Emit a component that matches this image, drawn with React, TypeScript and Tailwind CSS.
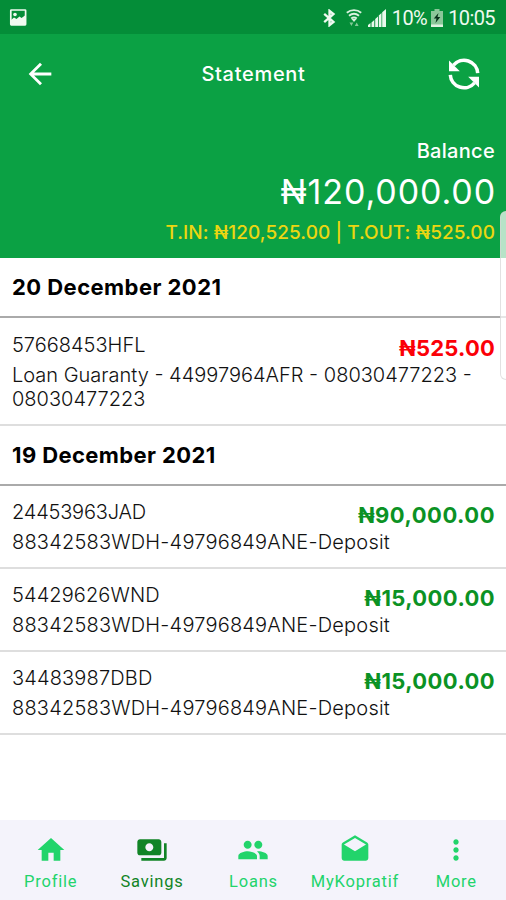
import { MdArrowBack, MdDrafts, MdHome, MdMoreVert, MdPayments, MdPeople } from "react-icons/md";

interface Transaction {
  id: string;
  idSpacing: string;
  details: string;
  detailsSpacing: string;
  amount: string;
  amountSpacing: string;
  debit?: boolean;
}

const groups: { date: string; dateSpacing: string; items: Transaction[] }[] = [
  {
    date: "20 December 2021",
    dateSpacing: "tracking-[0.45px]",
    items: [
      {
        id: "57668453HFL",
        idSpacing: "tracking-normal",
        details: "Loan Guaranty - 44997964AFR - 08030477223 - 08030477223",
        detailsSpacing: "tracking-normal",
        amount: "₦525.00",
        amountSpacing: "tracking-[0.2px]",
        debit: true,
      },
    ],
  },
  {
    date: "19 December 2021",
    dateSpacing: "tracking-[0.4px]",
    items: [
      {
        id: "24453963JAD",
        idSpacing: "tracking-[-0.2px]",
        details: "88342583WDH-49796849ANE-Deposit",
        detailsSpacing: "tracking-[0.2px]",
        amount: "₦90,000.00",
        amountSpacing: "tracking-[0.5px]",
      },
      {
        id: "54429626WND",
        idSpacing: "tracking-[0.1px]",
        details: "88342583WDH-49796849ANE-Deposit",
        detailsSpacing: "tracking-[0.2px]",
        amount: "₦15,000.00",
        amountSpacing: "tracking-[0.4px]",
      },
      {
        id: "34483987DBD",
        idSpacing: "tracking-[0.15px]",
        details: "88342583WDH-49796849ANE-Deposit",
        detailsSpacing: "tracking-[0.2px]",
        amount: "₦15,000.00",
        amountSpacing: "tracking-[0.4px]",
      },
    ],
  },
];

const tabs = [
  { label: "Profile", icon: MdHome, active: false },
  { label: "Savings", icon: MdPayments, active: true },
  { label: "Loans", icon: MdPeople, active: false },
  { label: "MyKopratif", icon: MdDrafts, active: false },
  { label: "More", icon: MdMoreVert, active: false },
];

function PictureIcon() {
  return (
    <svg width="18" height="17" viewBox="0 0 18 17" fill="none">
      <rect x="1.8" y="1" width="14.8" height="14.8" rx="0.5" stroke="#f0faf0" strokeWidth="1.7" />
      <path d="M2 11l3-2.5 2.5 1.5 3-2.5 2 1.5 3.5-2.5V15.5H2z" fill="#f0faf0" />
      <circle cx="6" cy="5.5" r="1.8" fill="#f0faf0" />
    </svg>
  );
}

function BluetoothIcon() {
  return (
    <svg width="13" height="18" viewBox="0 0 13 18" fill="none" stroke="#effaf0" strokeWidth="2.3">
      <path d="M1.2 4.8L10.5 13 6.5 16.2V1.8L10.5 5 1.2 13.2" />
      <path d="M6 1l5.5 4L8 9l3.5 4L6 17z" fill="#effaf0" fillOpacity="0.35" stroke="none" />
    </svg>
  );
}

function WifiIcon() {
  return (
    <svg width="16" height="18" viewBox="0 0 16 18" fill="none" stroke="#d9f2de" strokeWidth="1.9">
      <path d="M0.8 3.8c4.2-3.6 10.2-3.6 14.4 0M3 6.8c3-2.5 7-2.5 10 0M5.2 9.6c1.7-1.4 3.9-1.4 5.6 0" />
      <path d="M5.5 10h5L8 13z" fill="#d9f2de" stroke="none" />
      <path d="M3.5 13.5h3.8l-1.9 3.5zM8.8 17h3.8l-1.9-3.5z" fill="#83c996" stroke="none" />
    </svg>
  );
}

function SignalIcon() {
  return (
    <svg width="18" height="18" viewBox="0 0 18 18" fill="#e9f8ec">
      <path d="M0 16L2.5 14V18H0zM3.5 13.5L6.3 11V18H3.5zM7.2 10L10 7.5V18H7.2zM10.8 6.5L13.5 4V18h-2.7zM14.2 3.2L18 0v18h-3.8z" />
    </svg>
  );
}

function BatteryIcon() {
  return (
    <svg width="12" height="18" viewBox="0 0 12 18">
      <path d="M3.5 0h5v2H12v16H0V2h3.5z" fill="#8bc79a" />
      <path d="M0 15.5h12V18H0z" fill="#dff3e2" />
      <path d="M7.5 4L2.8 9.5h2.7L4.5 14l4.8-6H6.5z" fill="#07301a" />
    </svg>
  );
}

function SyncIcon() {
  return (
    <svg width="32" height="32" viewBox="0 0 32 32" fill="none">
      <path d="M5.5 7.2A13.7 13.7 0 0 1 29.7 15.2" stroke="white" strokeWidth="3.5" />
      <path d="M26.5 24.8A13.7 13.7 0 0 1 2.3 16.8" stroke="white" strokeWidth="3.5" />
      <path d="M1 2.5v10.8h10.8z" fill="white" />
      <path d="M31 29.5V18.7H20.2z" fill="white" />
    </svg>
  );
}

function StatusBar() {
  return (
    <div className="flex h-[34px] items-center bg-[#048d38] pl-[9px] pr-[11px]">
      <PictureIcon />
      <div className="ml-auto flex items-center pt-px font-[Roboto,sans-serif] text-[20px] leading-none text-[#effaf0]">
        <span className="mr-[10px]"><BluetoothIcon /></span>
        <WifiIcon />
        <span className="ml-[6px] mr-[6px]"><SignalIcon /></span>
        <span className="tracking-[-0.6px]">10%</span>
        <span className="ml-[4px] mr-[5px]"><BatteryIcon /></span>
        <span className="tracking-[-0.6px]">10:05</span>
      </div>
    </div>
  );
}

function TransactionRow({ item }: { item: Transaction }) {
  return (
    <div className={`border-b-2 border-[#dedede] px-3 ${item.debit ? "h-[108px] pt-[14px]" : "h-[83px] pt-[13px]"}`}>
      <div className="flex h-[31px] justify-between">
        <span className={`text-[20px] font-light leading-[26px] ${item.idSpacing}`}>{item.id}</span>
        <span
          className={`-mr-px pt-[3px] text-[22px] font-bold leading-[26px] ${item.amountSpacing} ${item.debit ? "text-[#fb0007]" : "text-[#0b9224]"}`}
        >
          {item.amount}
        </span>
      </div>
      <p className={`text-[20px] font-light leading-[24px] ${item.detailsSpacing}`}>{item.details}</p>
    </div>
  );
}

export default function App() {
  return (
    <div className="relative flex h-[900px] w-[506px] flex-col overflow-hidden bg-white font-[Inter,sans-serif] text-[#111]">
      <StatusBar />

      <header className="h-[224px] bg-[#0ba144] text-white">
        <div className="grid h-[80px] grid-cols-3 items-center pl-[23px] pr-[26px]">
          <MdArrowBack size={34} />
          <h1 className="pl-[4px] text-center text-[20px] font-medium leading-[30px] tracking-[0.7px]">Statement</h1>
          <button className="justify-self-end"><SyncIcon /></button>
        </div>
        <div className="flex flex-col items-end pr-[11px] pt-[23px]">
          <span className="text-[20px] font-medium leading-[28px] tracking-[0.3px]">Balance</span>
          <span className="-mr-px mt-[7px] text-[34px] font-normal leading-[40px] tracking-[0.9px]">₦120,000.00</span>
          <span className="mt-[9px] whitespace-pre text-[19px] font-medium leading-[24px] tracking-[0.06px] text-[#ecd611]">
            T.IN: ₦120,525.00 | T.OUT: ₦525.00
          </span>
        </div>
      </header>

      <main className="flex-1">
        {groups.map((group) => (
          <section key={group.date}>
            <h2 className={`h-[60px] border-b-2 border-[#aaaaaa] px-3 pt-[15px] text-[22px] font-bold leading-[28px] text-black ${group.dateSpacing}`}>
              {group.date}
            </h2>
            {group.items.map((item) => (
              <TransactionRow key={item.id} item={item} />
            ))}
          </section>
        ))}
      </main>

      <nav className="-mr-px grid h-[80px] grid-cols-5 bg-[#f4f3fb] font-[Roboto,sans-serif]">
        {tabs.map(({ label, icon: Icon, active }) => (
          <button
            key={label}
            className={`flex flex-col items-center pt-[14px] text-[16.5px] leading-[24px] tracking-[0.8px] ${active ? "text-[#118426]" : "text-[#22d46b]"}`}
          >
            <Icon size={32} />
            <span className="mt-[4px]">{label}</span>
          </button>
        ))}
      </nav>

      {/* edge panel handle */}
      <div className="absolute right-[-8px] top-[211px] h-[169px] w-[14px] rounded-[6px] border border-[#d5d5d5]/70 bg-white/70" />
    </div>
  );
}
